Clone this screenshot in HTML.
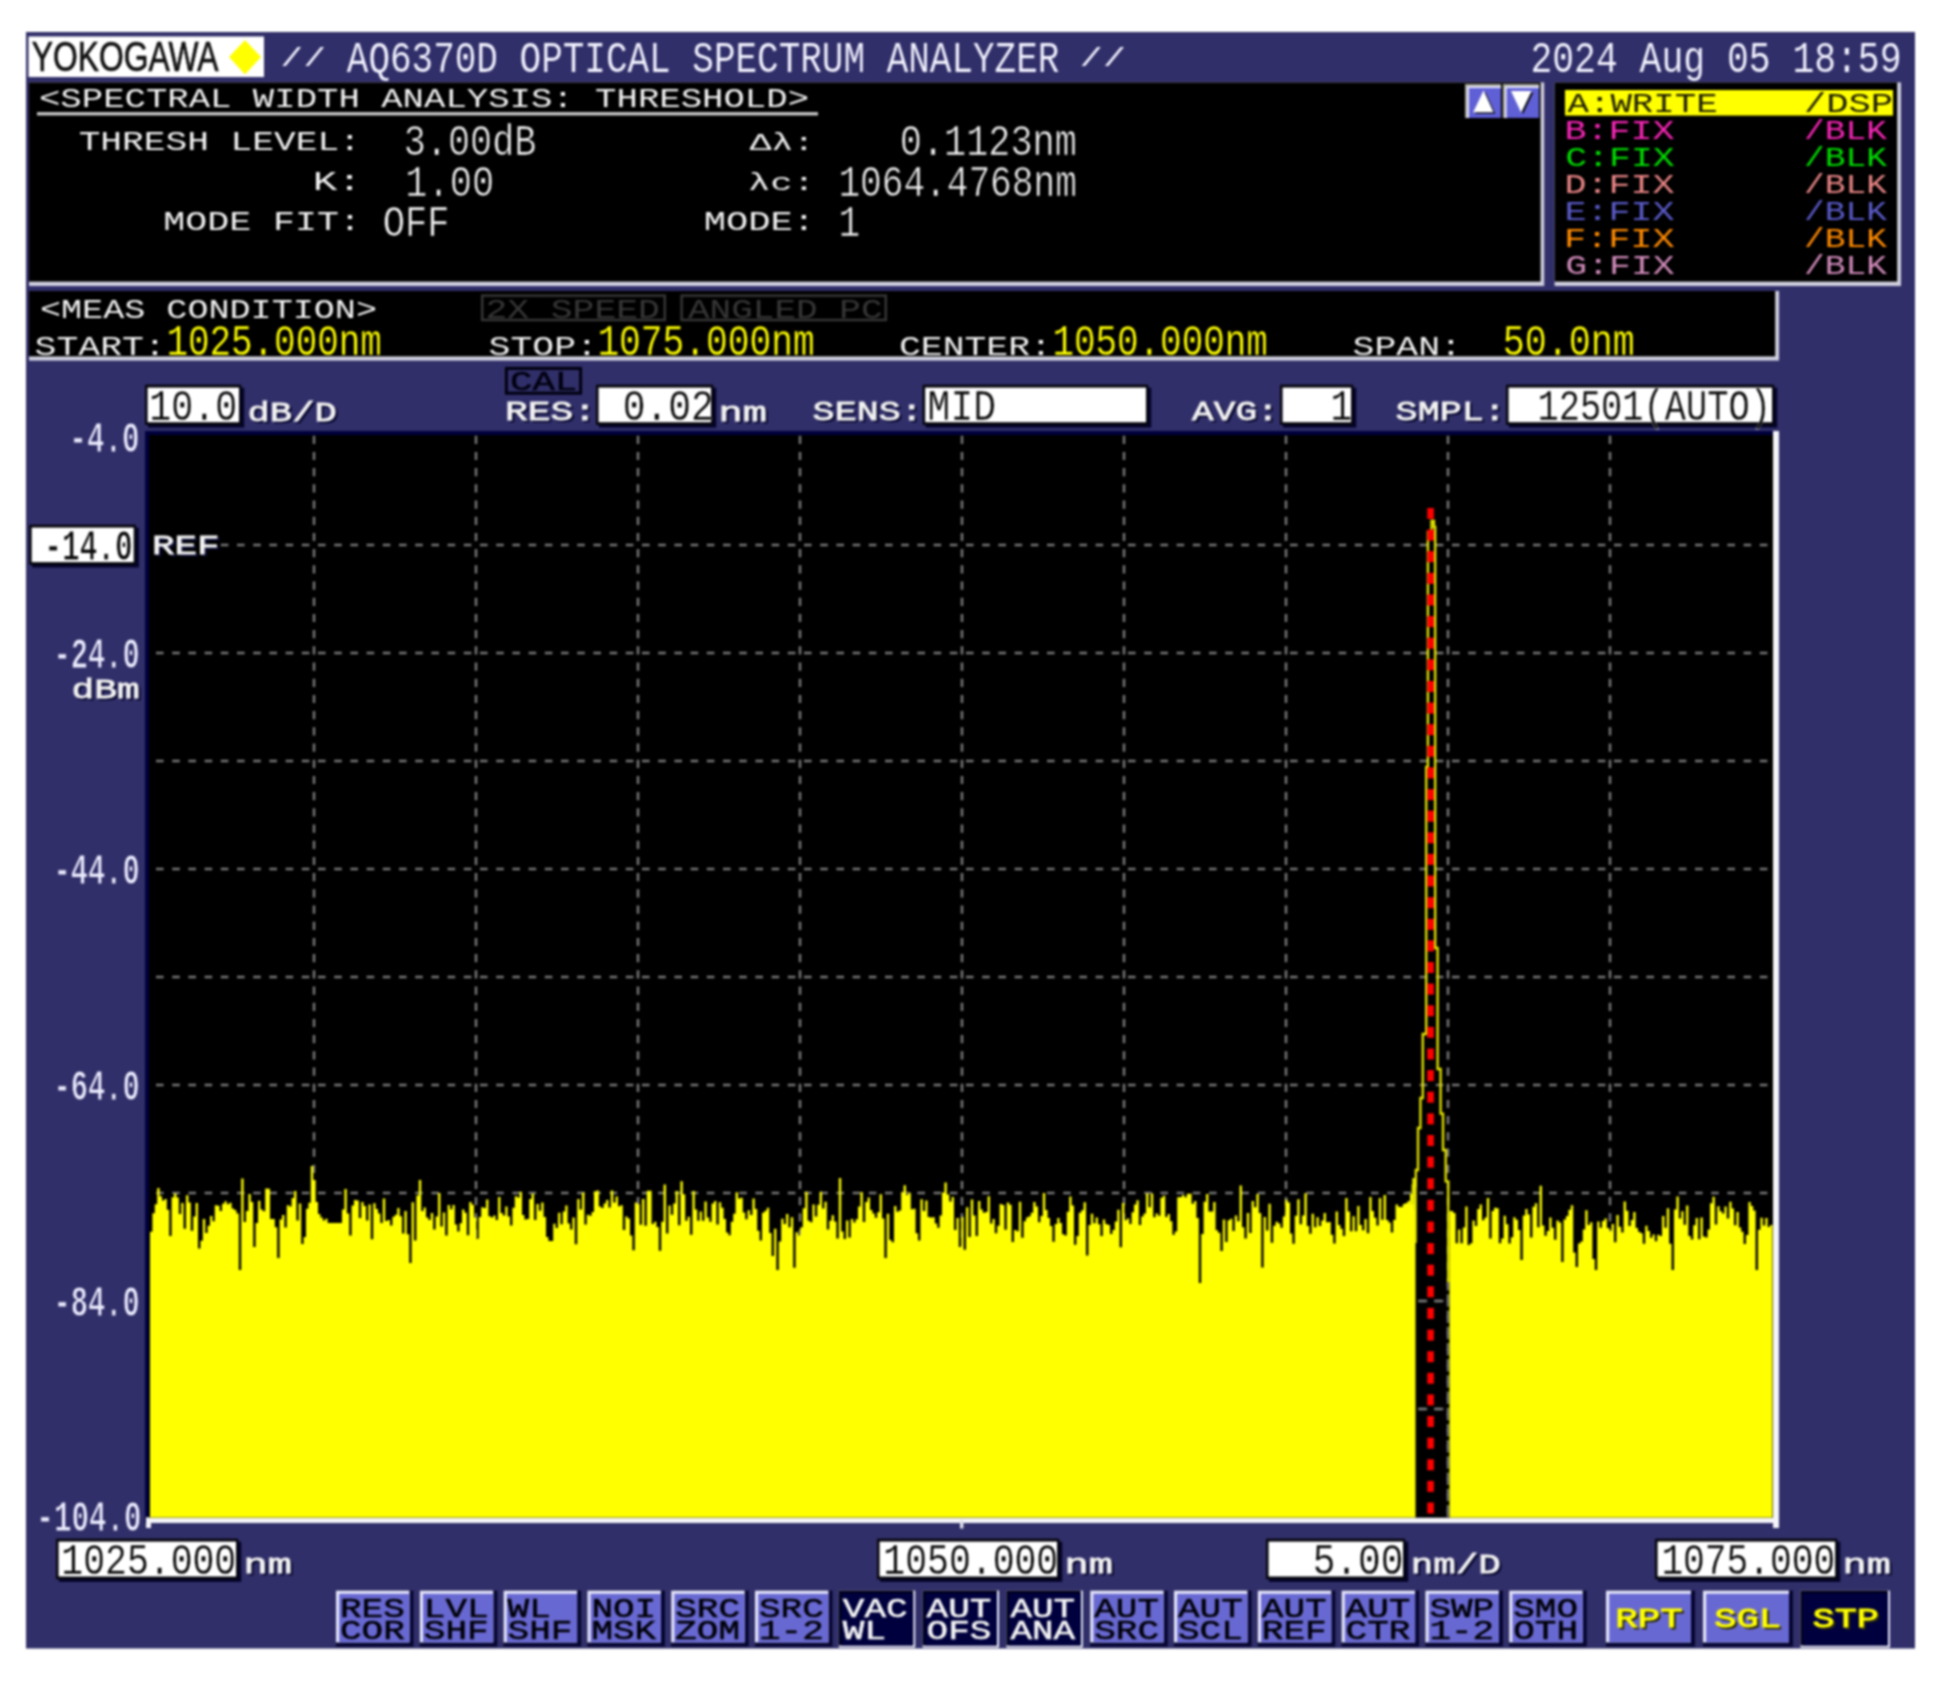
<!DOCTYPE html>
<html lang="en">
<head>
<meta charset="utf-8">
<title>AQ6370D Optical Spectrum Analyzer</title>
<style>
html,body{margin:0;padding:0;background:#ffffff;}
body{width:1939px;height:1681px;overflow:hidden;}
svg{display:block;}
text{white-space:pre;}
</style>
</head>
<body>
<svg width="1939" height="1681" viewBox="0 0 1939 1681">
<defs>
<filter id="soft0" x="0" y="0" width="1939" height="1681" filterUnits="userSpaceOnUse" color-interpolation-filters="sRGB"><feGaussianBlur stdDeviation="1"/></filter>
</defs>
<rect x="0" y="0" width="1939" height="1681" fill="#ffffff"/>
<g filter="url(#soft0)">
<rect x="26.00" y="32.00" width="1889.00" height="1616.50" fill="#312f69"/>
<rect x="28.50" y="36.50" width="235.50" height="40.50" fill="#ffffff"/>
<text x="31.81" y="71.30" fill="#101010" font-family="'Liberation Sans', sans-serif" font-size="42.73" textLength="186.75" lengthAdjust="spacingAndGlyphs" xml:space="preserve" stroke="#101010" stroke-width="0.7">YOKOGAWA</text>
<polygon points="229,57 245,40 261,57 245,74.5" fill="#ffff00"/>
<text x="346.80" y="71.60" fill="#f2f2ff" stroke="#312f69" stroke-width="0.15" font-family="'Liberation Mono', monospace" font-size="44.63" textLength="712.61" lengthAdjust="spacingAndGlyphs" xml:space="preserve">AQ6370D OPTICAL SPECTRUM ANALYZER</text>
<text x="280.27" y="66.34" fill="#f2f2ff" font-family="'Liberation Mono', monospace" font-size="26.69" textLength="45.89" lengthAdjust="spacingAndGlyphs" xml:space="preserve">//</text>
<text x="1079.43" y="66.34" fill="#f2f2ff" font-family="'Liberation Mono', monospace" font-size="26.69" textLength="46.78" lengthAdjust="spacingAndGlyphs" xml:space="preserve">//</text>
<text x="1530.44" y="71.60" fill="#f2f2ff" stroke="#312f69" stroke-width="0.15" font-family="'Liberation Mono', monospace" font-size="44.63" textLength="371.08" lengthAdjust="spacingAndGlyphs" xml:space="preserve">2024 Aug 05 18:59</text>
<rect x="29.00" y="82.40" width="1515.20" height="203.60" fill="#cfcfde"/>
<rect x="29.00" y="82.40" width="1511.60" height="199.20" fill="#000000"/>
<text x="38.98" y="107.00" fill="#f2f2f2" stroke="#000000" stroke-width="0.00" font-family="'Liberation Mono', monospace" font-size="28.24" textLength="770.07" lengthAdjust="spacingAndGlyphs" xml:space="preserve">&lt;SPECTRAL WIDTH ANALYSIS: THRESHOLD&gt;</text>
<rect x="37.00" y="112.20" width="781.00" height="3.20" fill="#d0d0d0"/>
<text x="78.66" y="150.00" fill="#f2f2f2" stroke="#000000" stroke-width="0.00" font-family="'Liberation Mono', monospace" font-size="28.24" textLength="282.14" lengthAdjust="spacingAndGlyphs" xml:space="preserve">THRESH LEVEL:</text>
<text x="312.76" y="190.00" fill="#f2f2f2" stroke="#000000" stroke-width="0.00" font-family="'Liberation Mono', monospace" font-size="28.24" textLength="49.21" lengthAdjust="spacingAndGlyphs" xml:space="preserve">K:</text>
<text x="163.30" y="230.40" fill="#f2f2f2" stroke="#000000" stroke-width="0.00" font-family="'Liberation Mono', monospace" font-size="28.24" textLength="197.60" lengthAdjust="spacingAndGlyphs" xml:space="preserve">MODE FIT:</text>
<text x="403.70" y="155.00" fill="#f2f2f2" stroke="#000000" stroke-width="0.70" font-family="'Liberation Mono', monospace" font-size="44.63" textLength="132.69" lengthAdjust="spacingAndGlyphs" xml:space="preserve">3.00dB</text>
<text x="405.32" y="195.60" fill="#f2f2f2" stroke="#000000" stroke-width="0.70" font-family="'Liberation Mono', monospace" font-size="44.63" textLength="88.96" lengthAdjust="spacingAndGlyphs" xml:space="preserve">1.00</text>
<text x="382.65" y="236.00" fill="#f2f2f2" stroke="#000000" stroke-width="0.70" font-family="'Liberation Mono', monospace" font-size="44.63" textLength="66.97" lengthAdjust="spacingAndGlyphs" xml:space="preserve">OFF</text>
<text x="749.79" y="150.00" fill="#f2f2f2" stroke="#000000" stroke-width="0.00" font-family="'Liberation Mono', monospace" font-size="24.28" textLength="64.99" lengthAdjust="spacingAndGlyphs" xml:space="preserve">Δλ:</text>
<text x="747.92" y="190.00" fill="#f2f2f2" stroke="#000000" stroke-width="0.00" font-family="'Liberation Mono', monospace" font-size="24.28" textLength="67.15" lengthAdjust="spacingAndGlyphs" xml:space="preserve">λc:</text>
<text x="703.66" y="230.40" fill="#f2f2f2" stroke="#000000" stroke-width="0.00" font-family="'Liberation Mono', monospace" font-size="28.24" textLength="111.36" lengthAdjust="spacingAndGlyphs" xml:space="preserve">MODE:</text>
<text x="899.77" y="155.00" fill="#f2f2f2" stroke="#000000" stroke-width="0.70" font-family="'Liberation Mono', monospace" font-size="44.63" textLength="177.13" lengthAdjust="spacingAndGlyphs" xml:space="preserve">0.1123nm</text>
<text x="838.39" y="195.60" fill="#f2f2f2" stroke="#000000" stroke-width="0.70" font-family="'Liberation Mono', monospace" font-size="44.63" textLength="238.46" lengthAdjust="spacingAndGlyphs" xml:space="preserve">1064.4768nm</text>
<text x="838.50" y="236.00" fill="#f2f2f2" stroke="#000000" stroke-width="0.70" font-family="'Liberation Mono', monospace" font-size="44.63" textLength="21.60" lengthAdjust="spacingAndGlyphs" xml:space="preserve">1</text>
<rect x="1465.00" y="84.00" width="36.00" height="34.00" fill="#a8a8a0"/>
<rect x="1467.20" y="86.20" width="33.80" height="31.80" fill="#e8e8ff"/>
<rect x="1469.00" y="88.20" width="32.00" height="29.80" fill="#5a5ad0"/>
<rect x="1469.00" y="88.20" width="30.50" height="28.30" fill="#6060d6"/>
<polygon points="1485.4,92.1 1495.3,113.8 1475.0,113.8" fill="#101020"/>
<polygon points="1483.6,90.5 1493.5,112.2 1473.2,112.2" fill="#ffffff"/>
<rect x="1502.80" y="84.00" width="36.20" height="34.00" fill="#a8a8a0"/>
<rect x="1505.00" y="86.20" width="34.00" height="31.80" fill="#e8e8ff"/>
<rect x="1506.80" y="88.20" width="32.20" height="29.80" fill="#5a5ad0"/>
<rect x="1506.80" y="88.20" width="30.70" height="28.30" fill="#6060d6"/>
<polygon points="1512.8,92.6 1533.4,92.6 1523.0,114.2" fill="#101020"/>
<polygon points="1511.0,91.0 1531.6,91.0 1521.2,112.6" fill="#ffffff"/>
<rect x="1554.60" y="82.40" width="346.40" height="203.60" fill="#cfcfde"/>
<rect x="1554.60" y="82.40" width="342.60" height="199.20" fill="#000000"/>
<rect x="1565.00" y="90.00" width="328.00" height="25.60" fill="#ffff00"/>
<text x="1567.40" y="112.30" fill="#1c1c00" stroke="#ffff00" stroke-width="0.00" font-family="'Liberation Mono', monospace" font-size="28.24" textLength="150.47" lengthAdjust="spacingAndGlyphs" xml:space="preserve">A:WRITE</text>
<text x="1803.93" y="112.30" fill="#1c1c00" stroke="#ffff00" stroke-width="0.00" font-family="'Liberation Mono', monospace" font-size="28.24" textLength="89.06" lengthAdjust="spacingAndGlyphs" xml:space="preserve">/DSP</text>
<text x="1564.50" y="139.25" fill="#f626b6" font-family="'Liberation Mono', monospace" font-size="28.24" textLength="110.15" lengthAdjust="spacingAndGlyphs" xml:space="preserve">B:FIX</text>
<text x="1804.08" y="139.25" fill="#f626b6" font-family="'Liberation Mono', monospace" font-size="28.24" textLength="82.96" lengthAdjust="spacingAndGlyphs" xml:space="preserve">/BLK</text>
<text x="1565.39" y="166.20" fill="#00dc00" font-family="'Liberation Mono', monospace" font-size="28.24" textLength="109.25" lengthAdjust="spacingAndGlyphs" xml:space="preserve">C:FIX</text>
<text x="1804.08" y="166.20" fill="#00dc00" font-family="'Liberation Mono', monospace" font-size="28.24" textLength="82.96" lengthAdjust="spacingAndGlyphs" xml:space="preserve">/BLK</text>
<text x="1564.50" y="193.15" fill="#e88484" font-family="'Liberation Mono', monospace" font-size="28.24" textLength="110.15" lengthAdjust="spacingAndGlyphs" xml:space="preserve">D:FIX</text>
<text x="1804.08" y="193.15" fill="#e88484" font-family="'Liberation Mono', monospace" font-size="28.24" textLength="82.96" lengthAdjust="spacingAndGlyphs" xml:space="preserve">/BLK</text>
<text x="1564.50" y="220.10" fill="#5a5ac8" font-family="'Liberation Mono', monospace" font-size="28.24" textLength="110.15" lengthAdjust="spacingAndGlyphs" xml:space="preserve">E:FIX</text>
<text x="1804.08" y="220.10" fill="#5a5ac8" font-family="'Liberation Mono', monospace" font-size="28.24" textLength="82.96" lengthAdjust="spacingAndGlyphs" xml:space="preserve">/BLK</text>
<text x="1563.90" y="247.05" fill="#ff8a00" font-family="'Liberation Mono', monospace" font-size="28.24" textLength="110.75" lengthAdjust="spacingAndGlyphs" xml:space="preserve">F:FIX</text>
<text x="1804.08" y="247.05" fill="#ff8a00" font-family="'Liberation Mono', monospace" font-size="28.24" textLength="82.96" lengthAdjust="spacingAndGlyphs" xml:space="preserve">/BLK</text>
<text x="1565.39" y="274.00" fill="#d08aba" font-family="'Liberation Mono', monospace" font-size="28.24" textLength="109.25" lengthAdjust="spacingAndGlyphs" xml:space="preserve">G:FIX</text>
<text x="1804.08" y="274.00" fill="#d08aba" font-family="'Liberation Mono', monospace" font-size="28.24" textLength="82.96" lengthAdjust="spacingAndGlyphs" xml:space="preserve">/BLK</text>
<rect x="29.00" y="291.00" width="1750.00" height="69.60" fill="#cfcfde"/>
<rect x="29.00" y="291.00" width="1746.20" height="65.40" fill="#000000"/>
<text x="40.01" y="317.50" fill="#f2f2f2" stroke="#000000" stroke-width="0.00" font-family="'Liberation Mono', monospace" font-size="28.24" textLength="337.01" lengthAdjust="spacingAndGlyphs" xml:space="preserve">&lt;MEAS CONDITION&gt;</text>
<rect x="482.2" y="295.6" width="182.6" height="24.4" fill="none" stroke="#373737" stroke-width="2.4"/>
<text x="485.45" y="317.60" fill="#373737" stroke="#000000" stroke-width="0.00" font-family="'Liberation Mono', monospace" font-size="28.24" textLength="174.40" lengthAdjust="spacingAndGlyphs" xml:space="preserve">2X SPEED</text>
<rect x="681.6" y="295.6" width="204.20000000000002" height="24.4" fill="none" stroke="#373737" stroke-width="2.4"/>
<text x="688.00" y="317.60" fill="#373737" stroke="#000000" stroke-width="0.00" font-family="'Liberation Mono', monospace" font-size="28.24" textLength="194.53" lengthAdjust="spacingAndGlyphs" xml:space="preserve">ANGLED PC</text>
<text x="34.59" y="355.00" fill="#f2f2f2" stroke="#000000" stroke-width="0.00" font-family="'Liberation Mono', monospace" font-size="28.24" textLength="131.27" lengthAdjust="spacingAndGlyphs" xml:space="preserve">START:</text>
<text x="166.41" y="355.00" fill="#ffff00" stroke="#000000" stroke-width="0.30" font-family="'Liberation Mono', monospace" font-size="44.63" textLength="215.43" lengthAdjust="spacingAndGlyphs" xml:space="preserve">1025.000nm</text>
<text x="488.60" y="355.00" fill="#f2f2f2" stroke="#000000" stroke-width="0.00" font-family="'Liberation Mono', monospace" font-size="28.24" textLength="109.26" lengthAdjust="spacingAndGlyphs" xml:space="preserve">STOP:</text>
<text x="597.38" y="355.00" fill="#ffff00" stroke="#000000" stroke-width="0.30" font-family="'Liberation Mono', monospace" font-size="44.63" textLength="217.48" lengthAdjust="spacingAndGlyphs" xml:space="preserve">1075.000nm</text>
<text x="898.99" y="355.00" fill="#f2f2f2" stroke="#000000" stroke-width="0.00" font-family="'Liberation Mono', monospace" font-size="28.24" textLength="152.86" lengthAdjust="spacingAndGlyphs" xml:space="preserve">CENTER:</text>
<text x="1052.41" y="355.00" fill="#ffff00" stroke="#000000" stroke-width="0.30" font-family="'Liberation Mono', monospace" font-size="44.63" textLength="215.43" lengthAdjust="spacingAndGlyphs" xml:space="preserve">1050.000nm</text>
<text x="1352.60" y="355.00" fill="#f2f2f2" stroke="#000000" stroke-width="0.00" font-family="'Liberation Mono', monospace" font-size="28.24" textLength="109.26" lengthAdjust="spacingAndGlyphs" xml:space="preserve">SPAN:</text>
<text x="1502.71" y="355.00" fill="#ffff00" stroke="#000000" stroke-width="0.30" font-family="'Liberation Mono', monospace" font-size="44.63" textLength="132.18" lengthAdjust="spacingAndGlyphs" xml:space="preserve">50.0nm</text>
<rect x="148.00" y="387.70" width="96.30" height="39.90" fill="#04042a"/>
<rect x="145.00" y="384.70" width="96.30" height="40.30" fill="#06060e"/>
<rect x="147.60" y="387.60" width="91.40" height="34.60" fill="#ffffff"/>
<text x="149.35" y="420.00" fill="#080808" stroke="#ffffff" stroke-width="0.30" font-family="'Liberation Mono', monospace" font-size="44.63" textLength="87.90" lengthAdjust="spacingAndGlyphs" xml:space="preserve">10.0</text>
<text x="249.69" y="423.40" fill="#0c0c34" stroke="#0c0c34" stroke-width="0.8" font-family="'Liberation Mono', monospace" font-size="28.24" textLength="89.40" lengthAdjust="spacingAndGlyphs" xml:space="preserve">dB/D</text>
<text x="247.49" y="421.00" fill="#f2f2f2" font-family="'Liberation Mono', monospace" font-size="28.24" textLength="89.40" lengthAdjust="spacingAndGlyphs" xml:space="preserve" stroke="#f2f2f2" stroke-width="0.8">dB/D</text>
<rect x="506.4" y="368.4" width="74.2" height="24.8" fill="none" stroke="#000010" stroke-width="3.0"/>
<text x="509.93" y="390.00" fill="#000010" font-family="'Liberation Mono', monospace" font-size="28.24" textLength="67.43" lengthAdjust="spacingAndGlyphs" xml:space="preserve" stroke="#000010" stroke-width="0.5">CAL</text>
<text x="507.19" y="422.40" fill="#0c0c34" stroke="#0c0c34" stroke-width="0.8" font-family="'Liberation Mono', monospace" font-size="28.24" textLength="91.25" lengthAdjust="spacingAndGlyphs" xml:space="preserve">RES:</text>
<text x="504.99" y="420.00" fill="#f2f2f2" font-family="'Liberation Mono', monospace" font-size="28.24" textLength="91.25" lengthAdjust="spacingAndGlyphs" xml:space="preserve" stroke="#f2f2f2" stroke-width="0.8">RES:</text>
<rect x="599.00" y="387.70" width="117.30" height="39.90" fill="#04042a"/>
<rect x="596.00" y="384.70" width="117.30" height="40.30" fill="#06060e"/>
<rect x="598.60" y="387.60" width="112.40" height="34.60" fill="#ffffff"/>
<text x="622.71" y="420.00" fill="#080808" stroke="#ffffff" stroke-width="0.30" font-family="'Liberation Mono', monospace" font-size="44.63" textLength="90.98" lengthAdjust="spacingAndGlyphs" xml:space="preserve">0.02</text>
<text x="720.66" y="423.40" fill="#0c0c34" stroke="#0c0c34" stroke-width="0.8" font-family="'Liberation Mono', monospace" font-size="28.24" textLength="48.62" lengthAdjust="spacingAndGlyphs" xml:space="preserve">nm</text>
<text x="718.46" y="421.00" fill="#f2f2f2" font-family="'Liberation Mono', monospace" font-size="28.24" textLength="48.62" lengthAdjust="spacingAndGlyphs" xml:space="preserve" stroke="#f2f2f2" stroke-width="0.8">nm</text>
<text x="814.78" y="422.40" fill="#0c0c34" stroke="#0c0c34" stroke-width="0.8" font-family="'Liberation Mono', monospace" font-size="28.24" textLength="110.36" lengthAdjust="spacingAndGlyphs" xml:space="preserve">SENS:</text>
<text x="812.58" y="420.00" fill="#f2f2f2" font-family="'Liberation Mono', monospace" font-size="28.24" textLength="110.36" lengthAdjust="spacingAndGlyphs" xml:space="preserve" stroke="#f2f2f2" stroke-width="0.8">SENS:</text>
<rect x="925.60" y="387.70" width="225.70" height="39.90" fill="#04042a"/>
<rect x="922.60" y="384.70" width="225.70" height="40.30" fill="#06060e"/>
<rect x="925.20" y="387.60" width="220.80" height="34.60" fill="#ffffff"/>
<text x="927.61" y="420.00" fill="#080808" stroke="#ffffff" stroke-width="0.30" font-family="'Liberation Mono', monospace" font-size="44.63" textLength="68.32" lengthAdjust="spacingAndGlyphs" xml:space="preserve">MID</text>
<text x="1194.20" y="422.40" fill="#0c0c34" stroke="#0c0c34" stroke-width="0.8" font-family="'Liberation Mono', monospace" font-size="28.24" textLength="86.79" lengthAdjust="spacingAndGlyphs" xml:space="preserve">AVG:</text>
<text x="1192.00" y="420.00" fill="#f2f2f2" font-family="'Liberation Mono', monospace" font-size="28.24" textLength="86.79" lengthAdjust="spacingAndGlyphs" xml:space="preserve" stroke="#f2f2f2" stroke-width="0.8">AVG:</text>
<rect x="1283.00" y="387.70" width="73.30" height="39.90" fill="#04042a"/>
<rect x="1280.00" y="384.70" width="73.30" height="40.30" fill="#06060e"/>
<rect x="1282.60" y="387.60" width="68.40" height="34.60" fill="#ffffff"/>
<text x="1330.50" y="420.00" fill="#080808" stroke="#ffffff" stroke-width="0.30" font-family="'Liberation Mono', monospace" font-size="44.63" textLength="21.60" lengthAdjust="spacingAndGlyphs" xml:space="preserve">1</text>
<text x="1397.78" y="422.40" fill="#0c0c34" stroke="#0c0c34" stroke-width="0.8" font-family="'Liberation Mono', monospace" font-size="28.24" textLength="110.36" lengthAdjust="spacingAndGlyphs" xml:space="preserve">SMPL:</text>
<text x="1395.58" y="420.00" fill="#f2f2f2" font-family="'Liberation Mono', monospace" font-size="28.24" textLength="110.36" lengthAdjust="spacingAndGlyphs" xml:space="preserve" stroke="#f2f2f2" stroke-width="0.8">SMPL:</text>
<rect x="1509.00" y="387.70" width="268.30" height="39.90" fill="#04042a"/>
<rect x="1506.00" y="384.70" width="268.30" height="40.30" fill="#06060e"/>
<rect x="1508.60" y="387.60" width="263.40" height="34.60" fill="#ffffff"/>
<text x="1537.44" y="420.00" fill="#080808" stroke="#ffffff" stroke-width="0.30" font-family="'Liberation Mono', monospace" font-size="44.63" textLength="233.50" lengthAdjust="spacingAndGlyphs" xml:space="preserve">12501(AUTO)</text>
<rect x="145.00" y="431.00" width="1634.00" height="1092.00" fill="#00003c"/>
<rect x="1773.00" y="431.00" width="6.00" height="1097.00" fill="#f4f4f8"/>
<rect x="146.00" y="1517.50" width="1633.00" height="5.50" fill="#f4f4f8"/>
<rect x="146.00" y="1517.50" width="5.00" height="10.50" fill="#f4f4f8"/>
<rect x="960.00" y="1520.00" width="3.40" height="8.50" fill="#e0e0ee"/>
<rect x="149.00" y="435.00" width="1624.00" height="1082.50" fill="#000000"/>
<g stroke="#767676" stroke-width="2.5" fill="none"><line x1="314" y1="435.7" x2="314" y2="1517" stroke-dasharray="8.2 8.0" /><line x1="476" y1="435.7" x2="476" y2="1517" stroke-dasharray="8.2 8.0" /><line x1="638" y1="435.7" x2="638" y2="1517" stroke-dasharray="8.2 8.0" /><line x1="800" y1="435.7" x2="800" y2="1517" stroke-dasharray="8.2 8.0" /><line x1="962" y1="435.7" x2="962" y2="1517" stroke-dasharray="8.2 8.0" /><line x1="1124" y1="435.7" x2="1124" y2="1517" stroke-dasharray="8.2 8.0" /><line x1="1286" y1="435.7" x2="1286" y2="1517" stroke-dasharray="8.2 8.0" /><line x1="1448" y1="435.7" x2="1448" y2="1517" stroke-dasharray="8.2 8.0" /><line x1="1610" y1="435.7" x2="1610" y2="1517" stroke-dasharray="8.2 8.0" /><line x1="220.8" y1="545" x2="1771" y2="545" stroke-dasharray="7.6 8.6" /><line x1="156.0" y1="653" x2="1771" y2="653" stroke-dasharray="7.6 8.6" /><line x1="156.0" y1="761" x2="1771" y2="761" stroke-dasharray="7.6 8.6" /><line x1="156.0" y1="869" x2="1771" y2="869" stroke-dasharray="7.6 8.6" /><line x1="156.0" y1="977" x2="1771" y2="977" stroke-dasharray="7.6 8.6" /><line x1="156.0" y1="1085" x2="1771" y2="1085" stroke-dasharray="7.6 8.6" /><line x1="156.0" y1="1193" x2="1771" y2="1193" stroke-dasharray="7.6 8.6" /><line x1="156.0" y1="1301" x2="1771" y2="1301" stroke-dasharray="7.6 8.6" /><line x1="156.0" y1="1409" x2="1771" y2="1409" stroke-dasharray="7.6 8.6" /></g>
<g><polygon points="150.0,1517.5 150.0,1231.7 152.4,1231.7 152.4,1213.3 154.8,1213.3 154.8,1204.2 157.2,1204.2 157.2,1188.0 159.6,1188.0 159.6,1196.3 162.0,1196.3 162.0,1200.5 164.4,1200.5 164.4,1199.1 166.8,1199.1 166.8,1209.7 169.2,1209.7 169.2,1235.9 171.6,1235.9 171.6,1197.3 174.0,1197.3 174.0,1193.5 176.4,1193.5 176.4,1197.5 178.8,1197.5 178.8,1214.1 181.2,1214.1 181.2,1203.1 183.6,1203.1 183.6,1228.7 186.0,1228.7 186.0,1195.3 188.4,1195.3 188.4,1202.6 190.8,1202.6 190.8,1230.7 193.2,1230.7 193.2,1216.4 195.6,1216.4 195.6,1202.9 198.0,1202.9 198.0,1248.5 200.4,1248.5 200.4,1240.7 202.8,1240.7 202.8,1218.9 205.2,1218.9 205.2,1232.9 207.6,1232.9 207.6,1225.8 210.0,1225.8 210.0,1216.1 212.4,1216.1 212.4,1221.3 214.8,1221.3 214.8,1205.3 217.2,1205.3 217.2,1205.7 219.6,1205.7 219.6,1210.9 222.0,1210.9 222.0,1203.8 224.4,1203.8 224.4,1201.2 226.8,1201.2 226.8,1204.2 229.2,1204.2 229.2,1202.8 231.6,1202.8 231.6,1208.4 234.0,1208.4 234.0,1210.0 236.4,1210.0 236.4,1213.6 238.8,1213.6 238.8,1270.0 241.2,1270.0 241.2,1178.5 243.6,1178.5 243.6,1221.9 246.0,1221.9 246.0,1210.9 248.4,1210.9 248.4,1194.1 250.8,1194.1 250.8,1202.0 253.2,1202.0 253.2,1247.0 255.6,1247.0 255.6,1223.1 258.0,1223.1 258.0,1200.7 260.4,1200.7 260.4,1209.4 262.8,1209.4 262.8,1211.2 265.2,1211.2 265.2,1188.6 267.6,1188.6 267.6,1188.7 270.0,1188.7 270.0,1219.1 272.4,1219.1 272.4,1218.9 274.8,1218.9 274.8,1227.2 277.2,1227.2 277.2,1258.0 279.6,1258.0 279.6,1219.6 282.0,1219.6 282.0,1215.0 284.4,1215.0 284.4,1227.5 286.8,1227.5 286.8,1205.2 289.2,1205.2 289.2,1206.5 291.6,1206.5 291.6,1198.0 294.0,1198.0 294.0,1190.9 296.4,1190.9 296.4,1220.4 298.8,1220.4 298.8,1203.4 301.2,1203.4 301.2,1244.0 303.6,1244.0 303.6,1237.0 306.0,1237.0 306.0,1208.8 308.4,1208.8 308.4,1202.8 310.8,1202.8 310.8,1166.0 313.2,1166.0 313.2,1180.0 315.6,1180.0 315.6,1201.9 318.0,1201.9 318.0,1214.0 320.4,1214.0 320.4,1217.5 322.8,1217.5 322.8,1220.5 325.2,1220.5 325.2,1218.7 327.6,1218.7 327.6,1223.0 330.0,1223.0 330.0,1223.0 332.4,1223.0 332.4,1223.0 334.8,1223.0 334.8,1223.0 337.2,1223.0 337.2,1223.0 339.6,1223.0 339.6,1223.0 342.0,1223.0 342.0,1209.4 344.4,1209.4 344.4,1189.1 346.8,1189.1 346.8,1213.5 349.2,1213.5 349.2,1235.5 351.6,1235.5 351.6,1205.5 354.0,1205.5 354.0,1199.9 356.4,1199.9 356.4,1200.6 358.8,1200.6 358.8,1217.9 361.2,1217.9 361.2,1201.9 363.6,1201.9 363.6,1205.9 366.0,1205.9 366.0,1220.5 368.4,1220.5 368.4,1204.4 370.8,1204.4 370.8,1239.3 373.2,1239.3 373.2,1203.2 375.6,1203.2 375.6,1209.0 378.0,1209.0 378.0,1213.6 380.4,1213.6 380.4,1222.9 382.8,1222.9 382.8,1198.6 385.2,1198.6 385.2,1221.0 387.6,1221.0 387.6,1220.0 390.0,1220.0 390.0,1225.4 392.4,1225.4 392.4,1216.8 394.8,1216.8 394.8,1214.8 397.2,1214.8 397.2,1208.1 399.6,1208.1 399.6,1216.2 402.0,1216.2 402.0,1233.4 404.4,1233.4 404.4,1211.1 406.8,1211.1 406.8,1234.3 409.2,1234.3 409.2,1263.0 411.6,1263.0 411.6,1202.3 414.0,1202.3 414.0,1240.4 416.4,1240.4 416.4,1195.4 418.8,1195.4 418.8,1180.1 421.2,1180.1 421.2,1211.0 423.6,1211.0 423.6,1207.6 426.0,1207.6 426.0,1217.4 428.4,1217.4 428.4,1220.0 430.8,1220.0 430.8,1213.0 433.2,1213.0 433.2,1229.5 435.6,1229.5 435.6,1216.4 438.0,1216.4 438.0,1193.1 440.4,1193.1 440.4,1226.6 442.8,1226.6 442.8,1212.4 445.2,1212.4 445.2,1235.4 447.6,1235.4 447.6,1205.0 450.0,1205.0 450.0,1209.3 452.4,1209.3 452.4,1205.0 454.8,1205.0 454.8,1224.5 457.2,1224.5 457.2,1231.5 459.6,1231.5 459.6,1223.3 462.0,1223.3 462.0,1209.5 464.4,1209.5 464.4,1212.7 466.8,1212.7 466.8,1235.2 469.2,1235.2 469.2,1202.1 471.6,1202.1 471.6,1204.7 474.0,1204.7 474.0,1217.5 476.4,1217.5 476.4,1238.7 478.8,1238.7 478.8,1216.9 481.2,1216.9 481.2,1207.2 483.6,1207.2 483.6,1208.0 486.0,1208.0 486.0,1199.5 488.4,1199.5 488.4,1216.3 490.8,1216.3 490.8,1217.6 493.2,1217.6 493.2,1215.5 495.6,1215.5 495.6,1220.0 498.0,1220.0 498.0,1196.9 500.4,1196.9 500.4,1213.1 502.8,1213.1 502.8,1215.5 505.2,1215.5 505.2,1206.5 507.6,1206.5 507.6,1216.4 510.0,1216.4 510.0,1225.5 512.4,1225.5 512.4,1207.8 514.8,1207.8 514.8,1196.2 517.2,1196.2 517.2,1197.5 519.6,1197.5 519.6,1191.7 522.0,1191.7 522.0,1215.1 524.4,1215.1 524.4,1219.6 526.8,1219.6 526.8,1218.9 529.2,1218.9 529.2,1199.1 531.6,1199.1 531.6,1193.8 534.0,1193.8 534.0,1220.1 536.4,1220.1 536.4,1204.0 538.8,1204.0 538.8,1210.7 541.2,1210.7 541.2,1202.4 543.6,1202.4 543.6,1217.1 546.0,1217.1 546.0,1237.1 548.4,1237.1 548.4,1240.9 550.8,1240.9 550.8,1241.0 553.2,1241.0 553.2,1223.8 555.6,1223.8 555.6,1228.1 558.0,1228.1 558.0,1212.8 560.4,1212.8 560.4,1224.3 562.8,1224.3 562.8,1211.4 565.2,1211.4 565.2,1205.5 567.6,1205.5 567.6,1223.6 570.0,1223.6 570.0,1229.5 572.4,1229.5 572.4,1217.6 574.8,1217.6 574.8,1244.3 577.2,1244.3 577.2,1198.9 579.6,1198.9 579.6,1209.4 582.0,1209.4 582.0,1192.5 584.4,1192.5 584.4,1224.5 586.8,1224.5 586.8,1214.8 589.2,1214.8 589.2,1215.7 591.6,1215.7 591.6,1212.1 594.0,1212.1 594.0,1191.6 596.4,1191.6 596.4,1190.5 598.8,1190.5 598.8,1206.5 601.2,1206.5 601.2,1208.1 603.6,1208.1 603.6,1203.5 606.0,1203.5 606.0,1200.1 608.4,1200.1 608.4,1207.5 610.8,1207.5 610.8,1190.6 613.2,1190.6 613.2,1202.5 615.6,1202.5 615.6,1196.5 618.0,1196.5 618.0,1206.3 620.4,1206.3 620.4,1205.2 622.8,1205.2 622.8,1229.9 625.2,1229.9 625.2,1216.5 627.6,1216.5 627.6,1218.6 630.0,1218.6 630.0,1235.5 632.4,1235.5 632.4,1250.2 634.8,1250.2 634.8,1202.5 637.2,1202.5 637.2,1204.2 639.6,1204.2 639.6,1224.8 642.0,1224.8 642.0,1199.0 644.4,1199.0 644.4,1225.8 646.8,1225.8 646.8,1190.8 649.2,1190.8 649.2,1190.8 651.6,1190.8 651.6,1223.9 654.0,1223.9 654.0,1221.7 656.4,1221.7 656.4,1227.1 658.8,1227.1 658.8,1250.7 661.2,1250.7 661.2,1221.7 663.6,1221.7 663.6,1184.6 666.0,1184.6 666.0,1233.4 668.4,1233.4 668.4,1205.4 670.8,1205.4 670.8,1214.8 673.2,1214.8 673.2,1203.4 675.6,1203.4 675.6,1190.9 678.0,1190.9 678.0,1225.2 680.4,1225.2 680.4,1181.3 682.8,1181.3 682.8,1194.2 685.2,1194.2 685.2,1220.8 687.6,1220.8 687.6,1216.7 690.0,1216.7 690.0,1234.7 692.4,1234.7 692.4,1191.0 694.8,1191.0 694.8,1209.4 697.2,1209.4 697.2,1220.7 699.6,1220.7 699.6,1211.5 702.0,1211.5 702.0,1220.8 704.4,1220.8 704.4,1201.5 706.8,1201.5 706.8,1217.6 709.2,1217.6 709.2,1221.7 711.6,1221.7 711.6,1203.4 714.0,1203.4 714.0,1201.1 716.4,1201.1 716.4,1224.4 718.8,1224.4 718.8,1202.3 721.2,1202.3 721.2,1207.7 723.6,1207.7 723.6,1218.9 726.0,1218.9 726.0,1232.4 728.4,1232.4 728.4,1235.2 730.8,1235.2 730.8,1221.8 733.2,1221.8 733.2,1213.8 735.6,1213.8 735.6,1192.2 738.0,1192.2 738.0,1198.6 740.4,1198.6 740.4,1197.8 742.8,1197.8 742.8,1212.5 745.2,1212.5 745.2,1219.3 747.6,1219.3 747.6,1210.3 750.0,1210.3 750.0,1214.9 752.4,1214.9 752.4,1198.6 754.8,1198.6 754.8,1209.0 757.2,1209.0 757.2,1230.7 759.6,1230.7 759.6,1240.5 762.0,1240.5 762.0,1212.8 764.4,1212.8 764.4,1210.8 766.8,1210.8 766.8,1207.8 769.2,1207.8 769.2,1232.9 771.6,1232.9 771.6,1255.9 774.0,1255.9 774.0,1228.8 776.4,1228.8 776.4,1270.0 778.8,1270.0 778.8,1241.6 781.2,1241.6 781.2,1218.7 783.6,1218.7 783.6,1224.1 786.0,1224.1 786.0,1214.0 788.4,1214.0 788.4,1227.2 790.8,1227.2 790.8,1217.3 793.2,1217.3 793.2,1267.8 795.6,1267.8 795.6,1232.3 798.0,1232.3 798.0,1235.4 800.4,1235.4 800.4,1227.2 802.8,1227.2 802.8,1208.3 805.2,1208.3 805.2,1191.7 807.6,1191.7 807.6,1220.7 810.0,1220.7 810.0,1222.2 812.4,1222.2 812.4,1204.6 814.8,1204.6 814.8,1216.5 817.2,1216.5 817.2,1204.7 819.6,1204.7 819.6,1191.7 822.0,1191.7 822.0,1208.5 824.4,1208.5 824.4,1201.8 826.8,1201.8 826.8,1229.4 829.2,1229.4 829.2,1220.8 831.6,1220.8 831.6,1215.2 834.0,1215.2 834.0,1221.5 836.4,1221.5 836.4,1238.4 838.8,1238.4 838.8,1178.0 841.2,1178.0 841.2,1231.6 843.6,1231.6 843.6,1239.0 846.0,1239.0 846.0,1220.6 848.4,1220.6 848.4,1237.6 850.8,1237.6 850.8,1219.0 853.2,1219.0 853.2,1222.4 855.6,1222.4 855.6,1219.3 858.0,1219.3 858.0,1206.5 860.4,1206.5 860.4,1191.9 862.8,1191.9 862.8,1222.0 865.2,1222.0 865.2,1202.0 867.6,1202.0 867.6,1197.5 870.0,1197.5 870.0,1210.1 872.4,1210.1 872.4,1213.6 874.8,1213.6 874.8,1217.7 877.2,1217.7 877.2,1212.3 879.6,1212.3 879.6,1194.2 882.0,1194.2 882.0,1218.6 884.4,1218.6 884.4,1258.0 886.8,1258.0 886.8,1213.8 889.2,1213.8 889.2,1240.1 891.6,1240.1 891.6,1242.2 894.0,1242.2 894.0,1206.0 896.4,1206.0 896.4,1211.8 898.8,1211.8 898.8,1210.5 901.2,1210.5 901.2,1192.2 903.6,1192.2 903.6,1185.2 906.0,1185.2 906.0,1195.0 908.4,1195.0 908.4,1192.8 910.8,1192.8 910.8,1209.2 913.2,1209.2 913.2,1208.7 915.6,1208.7 915.6,1233.3 918.0,1233.3 918.0,1240.6 920.4,1240.6 920.4,1199.3 922.8,1199.3 922.8,1210.9 925.2,1210.9 925.2,1200.4 927.6,1200.4 927.6,1217.0 930.0,1217.0 930.0,1217.6 932.4,1217.6 932.4,1217.2 934.8,1217.2 934.8,1223.4 937.2,1223.4 937.2,1227.7 939.6,1227.7 939.6,1215.5 942.0,1215.5 942.0,1192.4 944.4,1192.4 944.4,1182.6 946.8,1182.6 946.8,1194.4 949.2,1194.4 949.2,1201.4 951.6,1201.4 951.6,1197.0 954.0,1197.0 954.0,1229.9 956.4,1229.9 956.4,1218.0 958.8,1218.0 958.8,1246.9 961.2,1246.9 961.2,1216.9 963.6,1216.9 963.6,1249.8 966.0,1249.8 966.0,1207.2 968.4,1207.2 968.4,1237.0 970.8,1237.0 970.8,1199.6 973.2,1199.6 973.2,1215.4 975.6,1215.4 975.6,1235.9 978.0,1235.9 978.0,1201.1 980.4,1201.1 980.4,1209.6 982.8,1209.6 982.8,1212.7 985.2,1212.7 985.2,1211.9 987.6,1211.9 987.6,1196.3 990.0,1196.3 990.0,1223.6 992.4,1223.6 992.4,1218.9 994.8,1218.9 994.8,1233.3 997.2,1233.3 997.2,1225.7 999.6,1225.7 999.6,1204.0 1002.0,1204.0 1002.0,1205.1 1004.4,1205.1 1004.4,1229.7 1006.8,1229.7 1006.8,1202.4 1009.2,1202.4 1009.2,1204.8 1011.6,1204.8 1011.6,1242.0 1014.0,1242.0 1014.0,1230.0 1016.4,1230.0 1016.4,1231.3 1018.8,1231.3 1018.8,1201.8 1021.2,1201.8 1021.2,1237.8 1023.6,1237.8 1023.6,1221.2 1026.0,1221.2 1026.0,1217.6 1028.4,1217.6 1028.4,1216.2 1030.8,1216.2 1030.8,1212.8 1033.2,1212.8 1033.2,1202.0 1035.6,1202.0 1035.6,1206.6 1038.0,1206.6 1038.0,1222.3 1040.4,1222.3 1040.4,1216.1 1042.8,1216.1 1042.8,1193.0 1045.2,1193.0 1045.2,1210.0 1047.6,1210.0 1047.6,1218.1 1050.0,1218.1 1050.0,1226.0 1052.4,1226.0 1052.4,1241.7 1054.8,1241.7 1054.8,1224.1 1057.2,1224.1 1057.2,1217.9 1059.6,1217.9 1059.6,1223.0 1062.0,1223.0 1062.0,1234.3 1064.4,1234.3 1064.4,1235.6 1066.8,1235.6 1066.8,1211.8 1069.2,1211.8 1069.2,1196.5 1071.6,1196.5 1071.6,1205.5 1074.0,1205.5 1074.0,1244.8 1076.4,1244.8 1076.4,1235.9 1078.8,1235.9 1078.8,1212.8 1081.2,1212.8 1081.2,1210.2 1083.6,1210.2 1083.6,1202.3 1086.0,1202.3 1086.0,1255.5 1088.4,1255.5 1088.4,1225.0 1090.8,1225.0 1090.8,1213.8 1093.2,1213.8 1093.2,1223.2 1095.6,1223.2 1095.6,1217.4 1098.0,1217.4 1098.0,1224.2 1100.4,1224.2 1100.4,1236.1 1102.8,1236.1 1102.8,1219.6 1105.2,1219.6 1105.2,1224.0 1107.6,1224.0 1107.6,1225.1 1110.0,1225.1 1110.0,1234.0 1112.4,1234.0 1112.4,1230.1 1114.8,1230.1 1114.8,1221.5 1117.2,1221.5 1117.2,1209.7 1119.6,1209.7 1119.6,1247.3 1122.0,1247.3 1122.0,1203.1 1124.4,1203.1 1124.4,1220.2 1126.8,1220.2 1126.8,1218.4 1129.2,1218.4 1129.2,1224.1 1131.6,1224.1 1131.6,1212.3 1134.0,1212.3 1134.0,1204.5 1136.4,1204.5 1136.4,1200.3 1138.8,1200.3 1138.8,1225.1 1141.2,1225.1 1141.2,1216.6 1143.6,1216.6 1143.6,1213.4 1146.0,1213.4 1146.0,1193.5 1148.4,1193.5 1148.4,1207.2 1150.8,1207.2 1150.8,1193.6 1153.2,1193.6 1153.2,1217.3 1155.6,1217.3 1155.6,1213.6 1158.0,1213.6 1158.0,1215.7 1160.4,1215.7 1160.4,1197.7 1162.8,1197.7 1162.8,1195.7 1165.2,1195.7 1165.2,1217.1 1167.6,1217.1 1167.6,1214.0 1170.0,1214.0 1170.0,1221.3 1172.4,1221.3 1172.4,1234.7 1174.8,1234.7 1174.8,1231.6 1177.2,1231.6 1177.2,1197.2 1179.6,1197.2 1179.6,1197.0 1182.0,1197.0 1182.0,1195.0 1184.4,1195.0 1184.4,1197.3 1186.8,1197.3 1186.8,1193.8 1189.2,1193.8 1189.2,1193.8 1191.6,1193.8 1191.6,1203.7 1194.0,1203.7 1194.0,1200.9 1196.4,1200.9 1196.4,1217.9 1198.8,1217.9 1198.8,1283.0 1201.2,1283.0 1201.2,1233.9 1203.6,1233.9 1203.6,1201.8 1206.0,1201.8 1206.0,1193.9 1208.4,1193.9 1208.4,1211.6 1210.8,1211.6 1210.8,1211.5 1213.2,1211.5 1213.2,1202.1 1215.6,1202.1 1215.6,1230.3 1218.0,1230.3 1218.0,1232.7 1220.4,1232.7 1220.4,1251.0 1222.8,1251.0 1222.8,1219.6 1225.2,1219.6 1225.2,1242.0 1227.6,1242.0 1227.6,1220.2 1230.0,1220.2 1230.0,1218.8 1232.4,1218.8 1232.4,1230.9 1234.8,1230.9 1234.8,1215.5 1237.2,1215.5 1237.2,1221.3 1239.6,1221.3 1239.6,1185.6 1242.0,1185.6 1242.0,1227.2 1244.4,1227.2 1244.4,1238.5 1246.8,1238.5 1246.8,1213.1 1249.2,1213.1 1249.2,1233.1 1251.6,1233.1 1251.6,1201.1 1254.0,1201.1 1254.0,1207.2 1256.4,1207.2 1256.4,1194.1 1258.8,1194.1 1258.8,1213.1 1261.2,1213.1 1261.2,1267.6 1263.6,1267.6 1263.6,1217.0 1266.0,1217.0 1266.0,1230.4 1268.4,1230.4 1268.4,1203.8 1270.8,1203.8 1270.8,1242.8 1273.2,1242.8 1273.2,1225.7 1275.6,1225.7 1275.6,1221.8 1278.0,1221.8 1278.0,1223.6 1280.4,1223.6 1280.4,1227.8 1282.8,1227.8 1282.8,1216.4 1285.2,1216.4 1285.2,1199.7 1287.6,1199.7 1287.6,1202.4 1290.0,1202.4 1290.0,1233.4 1292.4,1233.4 1292.4,1243.8 1294.8,1243.8 1294.8,1215.7 1297.2,1215.7 1297.2,1199.3 1299.6,1199.3 1299.6,1224.3 1302.0,1224.3 1302.0,1215.4 1304.4,1215.4 1304.4,1193.2 1306.8,1193.2 1306.8,1225.9 1309.2,1225.9 1309.2,1233.8 1311.6,1233.8 1311.6,1213.7 1314.0,1213.7 1314.0,1227.2 1316.4,1227.2 1316.4,1217.3 1318.8,1217.3 1318.8,1226.1 1321.2,1226.1 1321.2,1220.5 1323.6,1220.5 1323.6,1213.1 1326.0,1213.1 1326.0,1222.2 1328.4,1222.2 1328.4,1222.1 1330.8,1222.1 1330.8,1234.7 1333.2,1234.7 1333.2,1243.4 1335.6,1243.4 1335.6,1211.5 1338.0,1211.5 1338.0,1224.9 1340.4,1224.9 1340.4,1228.8 1342.8,1228.8 1342.8,1235.9 1345.2,1235.9 1345.2,1198.0 1347.6,1198.0 1347.6,1211.6 1350.0,1211.6 1350.0,1231.3 1352.4,1231.3 1352.4,1216.3 1354.8,1216.3 1354.8,1231.2 1357.2,1231.2 1357.2,1206.1 1359.6,1206.1 1359.6,1224.9 1362.0,1224.9 1362.0,1230.2 1364.4,1230.2 1364.4,1218.9 1366.8,1218.9 1366.8,1233.3 1369.2,1233.3 1369.2,1197.0 1371.6,1197.0 1371.6,1211.1 1374.0,1211.1 1374.0,1217.7 1376.4,1217.7 1376.4,1225.5 1378.8,1225.5 1378.8,1197.9 1381.2,1197.9 1381.2,1219.7 1383.6,1219.7 1383.6,1194.9 1386.0,1194.9 1386.0,1220.1 1388.4,1220.1 1388.4,1222.6 1390.8,1222.6 1390.8,1232.6 1393.2,1232.6 1393.2,1219.9 1395.6,1219.9 1395.6,1204.4 1398.0,1204.4 1398.0,1206.7 1400.4,1206.7 1400.4,1207.0 1402.8,1207.0 1402.8,1204.0 1405.2,1204.0 1405.2,1203.0 1407.6,1203.0 1407.6,1201.0 1410.0,1201.0 1410.0,1194.0 1412.4,1194.0 1412.4,1178.0 1414.8,1178.0 1414.8,1210.1 1415.5,1210.1 1415.5,1517.5" fill="#ffff00"/><polygon points="1449.5,1517.5 1449.5,1211.0 1453.2,1211.0 1453.2,1213.0 1455.6,1213.0 1455.6,1243.2 1458.0,1243.2 1458.0,1229.6 1460.4,1229.6 1460.4,1243.2 1462.8,1243.2 1462.8,1227.5 1465.2,1227.5 1465.2,1206.4 1467.6,1206.4 1467.6,1244.9 1470.0,1244.9 1470.0,1243.3 1472.4,1243.3 1472.4,1220.4 1474.8,1220.4 1474.8,1226.1 1477.2,1226.1 1477.2,1208.9 1479.6,1208.9 1479.6,1204.4 1482.0,1204.4 1482.0,1220.2 1484.4,1220.2 1484.4,1217.5 1486.8,1217.5 1486.8,1198.0 1489.2,1198.0 1489.2,1238.6 1491.6,1238.6 1491.6,1211.1 1494.0,1211.1 1494.0,1207.8 1496.4,1207.8 1496.4,1208.2 1498.8,1208.2 1498.8,1243.3 1501.2,1243.3 1501.2,1238.6 1503.6,1238.6 1503.6,1215.8 1506.0,1215.8 1506.0,1224.3 1508.4,1224.3 1508.4,1243.4 1510.8,1243.4 1510.8,1237.2 1513.2,1237.2 1513.2,1217.2 1515.6,1217.2 1515.6,1219.8 1518.0,1219.8 1518.0,1230.0 1520.4,1230.0 1520.4,1260.0 1522.8,1260.0 1522.8,1215.4 1525.2,1215.4 1525.2,1209.1 1527.6,1209.1 1527.6,1214.4 1530.0,1214.4 1530.0,1237.6 1532.4,1237.6 1532.4,1206.8 1534.8,1206.8 1534.8,1203.2 1537.2,1203.2 1537.2,1227.2 1539.6,1227.2 1539.6,1185.7 1542.0,1185.7 1542.0,1225.6 1544.4,1225.6 1544.4,1235.8 1546.8,1235.8 1546.8,1230.9 1549.2,1230.9 1549.2,1217.5 1551.6,1217.5 1551.6,1227.7 1554.0,1227.7 1554.0,1239.7 1556.4,1239.7 1556.4,1220.4 1558.8,1220.4 1558.8,1222.6 1561.2,1222.6 1561.2,1262.0 1563.6,1262.0 1563.6,1219.4 1566.0,1219.4 1566.0,1215.9 1568.4,1215.9 1568.4,1209.8 1570.8,1209.8 1570.8,1205.2 1573.2,1205.2 1573.2,1252.4 1575.6,1252.4 1575.6,1267.1 1578.0,1267.1 1578.0,1243.5 1580.4,1243.5 1580.4,1241.4 1582.8,1241.4 1582.8,1229.6 1585.2,1229.6 1585.2,1210.2 1587.6,1210.2 1587.6,1224.9 1590.0,1224.9 1590.0,1222.3 1592.4,1222.3 1592.4,1259.0 1594.8,1259.0 1594.8,1270.0 1597.2,1270.0 1597.2,1221.5 1599.6,1221.5 1599.6,1227.8 1602.0,1227.8 1602.0,1220.9 1604.4,1220.9 1604.4,1218.5 1606.8,1218.5 1606.8,1227.9 1609.2,1227.9 1609.2,1231.3 1611.6,1231.3 1611.6,1223.9 1614.0,1223.9 1614.0,1242.2 1616.4,1242.2 1616.4,1214.9 1618.8,1214.9 1618.8,1226.7 1621.2,1226.7 1621.2,1232.4 1623.6,1232.4 1623.6,1201.6 1626.0,1201.6 1626.0,1210.8 1628.4,1210.8 1628.4,1226.0 1630.8,1226.0 1630.8,1220.1 1633.2,1220.1 1633.2,1212.1 1635.6,1212.1 1635.6,1228.0 1638.0,1228.0 1638.0,1231.8 1640.4,1231.8 1640.4,1233.2 1642.8,1233.2 1642.8,1243.7 1645.2,1243.7 1645.2,1225.7 1647.6,1225.7 1647.6,1230.9 1650.0,1230.9 1650.0,1237.8 1652.4,1237.8 1652.4,1234.4 1654.8,1234.4 1654.8,1241.2 1657.2,1241.2 1657.2,1234.8 1659.6,1234.8 1659.6,1235.9 1662.0,1235.9 1662.0,1216.0 1664.4,1216.0 1664.4,1227.7 1666.8,1227.7 1666.8,1208.2 1669.2,1208.2 1669.2,1243.8 1671.6,1243.8 1671.6,1270.0 1674.0,1270.0 1674.0,1209.6 1676.4,1209.6 1676.4,1196.5 1678.8,1196.5 1678.8,1218.4 1681.2,1218.4 1681.2,1211.3 1683.6,1211.3 1683.6,1224.7 1686.0,1224.7 1686.0,1205.5 1688.4,1205.5 1688.4,1235.9 1690.8,1235.9 1690.8,1239.4 1693.2,1239.4 1693.2,1225.3 1695.6,1225.3 1695.6,1218.1 1698.0,1218.1 1698.0,1239.3 1700.4,1239.3 1700.4,1217.5 1702.8,1217.5 1702.8,1236.4 1705.2,1236.4 1705.2,1237.5 1707.6,1237.5 1707.6,1229.5 1710.0,1229.5 1710.0,1203.2 1712.4,1203.2 1712.4,1196.7 1714.8,1196.7 1714.8,1224.4 1717.2,1224.4 1717.2,1206.2 1719.6,1206.2 1719.6,1211.3 1722.0,1211.3 1722.0,1213.4 1724.4,1213.4 1724.4,1206.6 1726.8,1206.6 1726.8,1218.5 1729.2,1218.5 1729.2,1201.8 1731.6,1201.8 1731.6,1208.6 1734.0,1208.6 1734.0,1225.2 1736.4,1225.2 1736.4,1212.0 1738.8,1212.0 1738.8,1227.4 1741.2,1227.4 1741.2,1231.8 1743.6,1231.8 1743.6,1243.9 1746.0,1243.9 1746.0,1235.1 1748.4,1235.1 1748.4,1202.1 1750.8,1202.1 1750.8,1205.9 1753.2,1205.9 1753.2,1210.4 1755.6,1210.4 1755.6,1270.0 1758.0,1270.0 1758.0,1229.8 1760.4,1229.8 1760.4,1217.7 1762.8,1217.7 1762.8,1225.5 1765.2,1225.5 1765.2,1217.9 1767.6,1217.9 1767.6,1227.1 1770.0,1227.1 1770.0,1225.1 1772.4,1225.1 1772.4,1517.5" fill="#ffff00"/><polyline points="1409.5,1203.0 1412.8,1203.0 1412.8,1185.5 1415.8,1185.5 1415.8,1170.0 1418.0,1170.0 1418.0,1128.0 1420.4,1128.0 1420.4,1098.0 1422.8,1098.0 1422.8,1034.0 1426.2,1034.0 1426.2,767.0 1427.9,767.0 1427.9,532.0 1431.5,532.0 1431.5,521.0 1434.0,521.0 1434.0,527.0 1435.2,527.0 1435.2,948.0 1437.6,948.0 1437.6,1069.0 1440.6,1069.0 1440.6,1113.6 1443.0,1113.6 1443.0,1150.0 1445.7,1150.0 1445.7,1181.4 1448.2,1181.4 1448.2,1282.0" fill="none" stroke="#e6e600" stroke-width="2.3" stroke-linejoin="miter"/><line x1="1415.6" y1="1185" x2="1415.6" y2="1243" stroke="#e6e600" stroke-width="2.2"/><line x1="1418" y1="1301" x2="1446" y2="1301" stroke="#767676" stroke-width="2.5" stroke-dasharray="7 9"/><line x1="1418" y1="1409" x2="1446" y2="1409" stroke="#767676" stroke-width="2.5" stroke-dasharray="7 9"/><line x1="1448" y1="1283" x2="1448" y2="1517" stroke="#767676" stroke-width="2.4" stroke-dasharray="7.6 8.6"/><g fill="#ff0000"><rect x="1427.3" y="508.0" width="6.6" height="11.0"/><rect x="1427.3" y="529.6" width="6.6" height="11.0"/><rect x="1427.3" y="551.2" width="6.6" height="11.0"/><rect x="1427.3" y="572.9" width="6.6" height="11.0"/><rect x="1427.3" y="594.5" width="6.6" height="11.0"/><rect x="1427.3" y="616.1" width="6.6" height="11.0"/><rect x="1427.3" y="637.7" width="6.6" height="11.0"/><rect x="1427.3" y="659.3" width="6.6" height="11.0"/><rect x="1427.3" y="681.0" width="6.6" height="11.0"/><rect x="1427.3" y="702.6" width="6.6" height="11.0"/><rect x="1427.3" y="724.2" width="6.6" height="11.0"/><rect x="1427.3" y="745.8" width="6.6" height="11.0"/><rect x="1427.3" y="767.4" width="6.6" height="11.0"/><rect x="1427.3" y="789.1" width="6.6" height="11.0"/><rect x="1427.3" y="810.7" width="6.6" height="11.0"/><rect x="1427.3" y="832.3" width="6.6" height="11.0"/><rect x="1427.3" y="853.9" width="6.6" height="11.0"/><rect x="1427.3" y="875.5" width="6.6" height="11.0"/><rect x="1427.3" y="897.2" width="6.6" height="11.0"/><rect x="1427.3" y="918.8" width="6.6" height="11.0"/><rect x="1427.3" y="940.4" width="6.6" height="11.0"/><rect x="1427.3" y="962.0" width="6.6" height="11.0"/><rect x="1427.3" y="983.6" width="6.6" height="11.0"/><rect x="1427.3" y="1005.3" width="6.6" height="11.0"/><rect x="1427.3" y="1026.9" width="6.6" height="11.0"/><rect x="1427.3" y="1048.5" width="6.6" height="11.0"/><rect x="1427.3" y="1070.1" width="6.6" height="11.0"/><rect x="1427.3" y="1091.7" width="6.6" height="11.0"/><rect x="1427.3" y="1113.4" width="6.6" height="11.0"/><rect x="1427.3" y="1135.0" width="6.6" height="11.0"/><rect x="1427.3" y="1156.6" width="6.6" height="11.0"/><rect x="1427.3" y="1178.2" width="6.6" height="11.0"/><rect x="1427.3" y="1199.8" width="6.6" height="11.0"/><rect x="1427.3" y="1221.5" width="6.6" height="11.0"/><rect x="1427.3" y="1243.1" width="6.6" height="11.0"/><rect x="1427.3" y="1264.7" width="6.6" height="11.0"/><rect x="1427.3" y="1286.3" width="6.6" height="11.0"/><rect x="1427.3" y="1307.9" width="6.6" height="11.0"/><rect x="1427.3" y="1329.6" width="6.6" height="11.0"/><rect x="1427.3" y="1351.2" width="6.6" height="11.0"/><rect x="1427.3" y="1372.8" width="6.6" height="11.0"/><rect x="1427.3" y="1394.4" width="6.6" height="11.0"/><rect x="1427.3" y="1416.0" width="6.6" height="11.0"/><rect x="1427.3" y="1437.7" width="6.6" height="11.0"/><rect x="1427.3" y="1459.3" width="6.6" height="11.0"/><rect x="1427.3" y="1480.9" width="6.6" height="11.0"/><rect x="1427.3" y="1502.5" width="6.6" height="11.0"/></g></g>
<text x="69.37" y="452.00" fill="#ececff" stroke="#312f69" stroke-width="1.00" font-family="'Liberation Mono', monospace" font-size="44.63" font-weight="bold" textLength="70.32" lengthAdjust="spacingAndGlyphs" xml:space="preserve">-4.0</text>
<rect x="32.10" y="527.70" width="106.90" height="39.80" fill="#04042a"/>
<rect x="29.10" y="524.70" width="106.90" height="40.20" fill="#06060e"/>
<rect x="31.70" y="527.60" width="102.00" height="34.50" fill="#ffffff"/>
<text x="44.34" y="560.00" fill="#080808" stroke="#ffffff" stroke-width="1.00" font-family="'Liberation Mono', monospace" font-size="44.63" font-weight="bold" textLength="88.36" lengthAdjust="spacingAndGlyphs" xml:space="preserve">-14.0</text>
<text x="154.23" y="556.40" fill="#0c0c34" stroke="#0c0c34" stroke-width="0.8" font-family="'Liberation Mono', monospace" font-size="28.24" textLength="67.61" lengthAdjust="spacingAndGlyphs" xml:space="preserve">REF</text>
<text x="152.03" y="554.00" fill="#f2f2f2" font-family="'Liberation Mono', monospace" font-size="28.24" textLength="67.61" lengthAdjust="spacingAndGlyphs" xml:space="preserve" stroke="#f2f2f2" stroke-width="0.8">REF</text>
<text x="53.46" y="668.00" fill="#ececff" stroke="#312f69" stroke-width="1.00" font-family="'Liberation Mono', monospace" font-size="44.63" font-weight="bold" textLength="86.20" lengthAdjust="spacingAndGlyphs" xml:space="preserve">-24.0</text>
<text x="73.64" y="700.40" fill="#0c0c34" stroke="#0c0c34" stroke-width="0.8" font-family="'Liberation Mono', monospace" font-size="28.24" textLength="68.52" lengthAdjust="spacingAndGlyphs" xml:space="preserve">dBm</text>
<text x="71.44" y="698.00" fill="#f2f2f2" font-family="'Liberation Mono', monospace" font-size="28.24" textLength="68.52" lengthAdjust="spacingAndGlyphs" xml:space="preserve" stroke="#f2f2f2" stroke-width="0.8">dBm</text>
<text x="53.46" y="884.00" fill="#ececff" stroke="#312f69" stroke-width="1.00" font-family="'Liberation Mono', monospace" font-size="44.63" font-weight="bold" textLength="86.20" lengthAdjust="spacingAndGlyphs" xml:space="preserve">-44.0</text>
<text x="53.46" y="1100.00" fill="#ececff" stroke="#312f69" stroke-width="1.00" font-family="'Liberation Mono', monospace" font-size="44.63" font-weight="bold" textLength="86.20" lengthAdjust="spacingAndGlyphs" xml:space="preserve">-64.0</text>
<text x="53.46" y="1316.00" fill="#ececff" stroke="#312f69" stroke-width="1.00" font-family="'Liberation Mono', monospace" font-size="44.63" font-weight="bold" textLength="86.20" lengthAdjust="spacingAndGlyphs" xml:space="preserve">-84.0</text>
<text x="36.37" y="1531.00" fill="#ececff" stroke="#312f69" stroke-width="1.00" font-family="'Liberation Mono', monospace" font-size="44.63" font-weight="bold" textLength="105.31" lengthAdjust="spacingAndGlyphs" xml:space="preserve">-104.0</text>
<rect x="59.00" y="1541.70" width="182.30" height="40.20" fill="#04042a"/>
<rect x="56.00" y="1538.70" width="182.30" height="40.60" fill="#06060e"/>
<rect x="58.60" y="1541.60" width="177.40" height="34.90" fill="#ffffff"/>
<text x="61.37" y="1574.00" fill="#080808" stroke="#ffffff" stroke-width="0.30" font-family="'Liberation Mono', monospace" font-size="44.63" textLength="174.87" lengthAdjust="spacingAndGlyphs" xml:space="preserve">1025.000</text>
<text x="245.66" y="1574.90" fill="#0c0c34" stroke="#0c0c34" stroke-width="0.8" font-family="'Liberation Mono', monospace" font-size="28.24" textLength="48.62" lengthAdjust="spacingAndGlyphs" xml:space="preserve">nm</text>
<text x="243.46" y="1572.50" fill="#f2f2f2" font-family="'Liberation Mono', monospace" font-size="28.24" textLength="48.62" lengthAdjust="spacingAndGlyphs" xml:space="preserve" stroke="#f2f2f2" stroke-width="0.8">nm</text>
<rect x="880.00" y="1541.70" width="182.30" height="40.20" fill="#04042a"/>
<rect x="877.00" y="1538.70" width="182.30" height="40.60" fill="#06060e"/>
<rect x="879.60" y="1541.60" width="177.40" height="34.90" fill="#ffffff"/>
<text x="883.37" y="1574.00" fill="#080808" stroke="#ffffff" stroke-width="0.30" font-family="'Liberation Mono', monospace" font-size="44.63" textLength="174.87" lengthAdjust="spacingAndGlyphs" xml:space="preserve">1050.000</text>
<text x="1066.66" y="1574.90" fill="#0c0c34" stroke="#0c0c34" stroke-width="0.8" font-family="'Liberation Mono', monospace" font-size="28.24" textLength="48.62" lengthAdjust="spacingAndGlyphs" xml:space="preserve">nm</text>
<text x="1064.46" y="1572.50" fill="#f2f2f2" font-family="'Liberation Mono', monospace" font-size="28.24" textLength="48.62" lengthAdjust="spacingAndGlyphs" xml:space="preserve" stroke="#f2f2f2" stroke-width="0.8">nm</text>
<rect x="1269.00" y="1541.70" width="139.30" height="40.20" fill="#04042a"/>
<rect x="1266.00" y="1538.70" width="139.30" height="40.60" fill="#06060e"/>
<rect x="1268.60" y="1541.60" width="134.40" height="34.90" fill="#ffffff"/>
<text x="1312.64" y="1574.00" fill="#080808" stroke="#ffffff" stroke-width="0.30" font-family="'Liberation Mono', monospace" font-size="44.63" textLength="90.69" lengthAdjust="spacingAndGlyphs" xml:space="preserve">5.00</text>
<text x="1412.92" y="1574.90" fill="#0c0c34" stroke="#0c0c34" stroke-width="0.8" font-family="'Liberation Mono', monospace" font-size="28.24" textLength="90.19" lengthAdjust="spacingAndGlyphs" xml:space="preserve">nm/D</text>
<text x="1410.72" y="1572.50" fill="#f2f2f2" font-family="'Liberation Mono', monospace" font-size="28.24" textLength="90.19" lengthAdjust="spacingAndGlyphs" xml:space="preserve" stroke="#f2f2f2" stroke-width="0.8">nm/D</text>
<rect x="1658.00" y="1541.70" width="182.40" height="40.20" fill="#04042a"/>
<rect x="1655.00" y="1538.70" width="182.40" height="40.60" fill="#06060e"/>
<rect x="1657.60" y="1541.60" width="177.50" height="34.90" fill="#ffffff"/>
<text x="1661.38" y="1574.00" fill="#080808" stroke="#ffffff" stroke-width="0.30" font-family="'Liberation Mono', monospace" font-size="44.63" textLength="173.84" lengthAdjust="spacingAndGlyphs" xml:space="preserve">1075.000</text>
<text x="1844.66" y="1574.90" fill="#0c0c34" stroke="#0c0c34" stroke-width="0.8" font-family="'Liberation Mono', monospace" font-size="28.24" textLength="48.62" lengthAdjust="spacingAndGlyphs" xml:space="preserve">nm</text>
<text x="1842.46" y="1572.50" fill="#f2f2f2" font-family="'Liberation Mono', monospace" font-size="28.24" textLength="48.62" lengthAdjust="spacingAndGlyphs" xml:space="preserve" stroke="#f2f2f2" stroke-width="0.8">nm</text>
<rect x="336.00" y="1590.60" width="77.50" height="55.90" fill="#050530"/>
<rect x="336.00" y="1590.60" width="73.50" height="51.90" fill="#e4e4fa"/>
<rect x="339.20" y="1593.80" width="70.30" height="48.70" fill="#6868d2"/>
<text x="340.00" y="1617.20" fill="#000008" font-family="'Liberation Mono', monospace" font-size="27.02" textLength="64.80" lengthAdjust="spacingAndGlyphs" xml:space="preserve" stroke="#000008" stroke-width="0.5">RES</text>
<text x="340.00" y="1639.20" fill="#000008" font-family="'Liberation Mono', monospace" font-size="27.02" textLength="64.80" lengthAdjust="spacingAndGlyphs" xml:space="preserve" stroke="#000008" stroke-width="0.5">COR</text>
<rect x="419.80" y="1590.60" width="77.50" height="55.90" fill="#050530"/>
<rect x="419.80" y="1590.60" width="73.50" height="51.90" fill="#e4e4fa"/>
<rect x="423.00" y="1593.80" width="70.30" height="48.70" fill="#6868d2"/>
<text x="423.80" y="1617.20" fill="#000008" font-family="'Liberation Mono', monospace" font-size="27.02" textLength="64.80" lengthAdjust="spacingAndGlyphs" xml:space="preserve" stroke="#000008" stroke-width="0.5">LVL</text>
<text x="423.80" y="1639.20" fill="#000008" font-family="'Liberation Mono', monospace" font-size="27.02" textLength="64.80" lengthAdjust="spacingAndGlyphs" xml:space="preserve" stroke="#000008" stroke-width="0.5">SHF</text>
<rect x="503.60" y="1590.60" width="77.50" height="55.90" fill="#050530"/>
<rect x="503.60" y="1590.60" width="73.50" height="51.90" fill="#e4e4fa"/>
<rect x="506.80" y="1593.80" width="70.30" height="48.70" fill="#6868d2"/>
<text x="507.60" y="1617.20" fill="#000008" font-family="'Liberation Mono', monospace" font-size="27.02" textLength="64.80" lengthAdjust="spacingAndGlyphs" xml:space="preserve" stroke="#000008" stroke-width="0.5">WL </text>
<text x="507.60" y="1639.20" fill="#000008" font-family="'Liberation Mono', monospace" font-size="27.02" textLength="64.80" lengthAdjust="spacingAndGlyphs" xml:space="preserve" stroke="#000008" stroke-width="0.5">SHF</text>
<rect x="587.40" y="1590.60" width="77.50" height="55.90" fill="#050530"/>
<rect x="587.40" y="1590.60" width="73.50" height="51.90" fill="#e4e4fa"/>
<rect x="590.60" y="1593.80" width="70.30" height="48.70" fill="#6868d2"/>
<text x="591.40" y="1617.20" fill="#000008" font-family="'Liberation Mono', monospace" font-size="27.02" textLength="64.80" lengthAdjust="spacingAndGlyphs" xml:space="preserve" stroke="#000008" stroke-width="0.5">NOI</text>
<text x="591.40" y="1639.20" fill="#000008" font-family="'Liberation Mono', monospace" font-size="27.02" textLength="64.80" lengthAdjust="spacingAndGlyphs" xml:space="preserve" stroke="#000008" stroke-width="0.5">MSK</text>
<rect x="671.20" y="1590.60" width="77.50" height="55.90" fill="#050530"/>
<rect x="671.20" y="1590.60" width="73.50" height="51.90" fill="#e4e4fa"/>
<rect x="674.40" y="1593.80" width="70.30" height="48.70" fill="#6868d2"/>
<text x="675.20" y="1617.20" fill="#000008" font-family="'Liberation Mono', monospace" font-size="27.02" textLength="64.80" lengthAdjust="spacingAndGlyphs" xml:space="preserve" stroke="#000008" stroke-width="0.5">SRC</text>
<text x="675.20" y="1639.20" fill="#000008" font-family="'Liberation Mono', monospace" font-size="27.02" textLength="64.80" lengthAdjust="spacingAndGlyphs" xml:space="preserve" stroke="#000008" stroke-width="0.5">ZOM</text>
<rect x="755.00" y="1590.60" width="77.50" height="55.90" fill="#050530"/>
<rect x="755.00" y="1590.60" width="73.50" height="51.90" fill="#e4e4fa"/>
<rect x="758.20" y="1593.80" width="70.30" height="48.70" fill="#6868d2"/>
<text x="759.00" y="1617.20" fill="#000008" font-family="'Liberation Mono', monospace" font-size="27.02" textLength="64.80" lengthAdjust="spacingAndGlyphs" xml:space="preserve" stroke="#000008" stroke-width="0.5">SRC</text>
<text x="759.00" y="1639.20" fill="#000008" font-family="'Liberation Mono', monospace" font-size="27.02" textLength="64.80" lengthAdjust="spacingAndGlyphs" xml:space="preserve" stroke="#000008" stroke-width="0.5">1-2</text>
<rect x="838.80" y="1590.60" width="76.40" height="57.00" fill="#f0f0ff"/>
<rect x="838.80" y="1590.60" width="74.40" height="54.90" fill="#000018"/>
<rect x="841.30" y="1593.10" width="71.90" height="52.40" fill="#00003e"/>
<text x="842.80" y="1617.20" fill="#f4f4f4" font-family="'Liberation Mono', monospace" font-size="27.02" textLength="64.80" lengthAdjust="spacingAndGlyphs" xml:space="preserve" stroke="#f4f4f4" stroke-width="0.5">VAC</text>
<text x="842.80" y="1639.20" fill="#f4f4f4" font-family="'Liberation Mono', monospace" font-size="27.02" textLength="64.80" lengthAdjust="spacingAndGlyphs" xml:space="preserve" stroke="#f4f4f4" stroke-width="0.5">WL </text>
<rect x="922.60" y="1590.60" width="76.40" height="57.00" fill="#f0f0ff"/>
<rect x="922.60" y="1590.60" width="74.40" height="54.90" fill="#000018"/>
<rect x="925.10" y="1593.10" width="71.90" height="52.40" fill="#00003e"/>
<text x="926.60" y="1617.20" fill="#f4f4f4" font-family="'Liberation Mono', monospace" font-size="27.02" textLength="64.80" lengthAdjust="spacingAndGlyphs" xml:space="preserve" stroke="#f4f4f4" stroke-width="0.5">AUT</text>
<text x="926.60" y="1639.20" fill="#f4f4f4" font-family="'Liberation Mono', monospace" font-size="27.02" textLength="64.80" lengthAdjust="spacingAndGlyphs" xml:space="preserve" stroke="#f4f4f4" stroke-width="0.5">OFS</text>
<rect x="1006.40" y="1590.60" width="76.40" height="57.00" fill="#f0f0ff"/>
<rect x="1006.40" y="1590.60" width="74.40" height="54.90" fill="#000018"/>
<rect x="1008.90" y="1593.10" width="71.90" height="52.40" fill="#00003e"/>
<text x="1010.40" y="1617.20" fill="#f4f4f4" font-family="'Liberation Mono', monospace" font-size="27.02" textLength="64.80" lengthAdjust="spacingAndGlyphs" xml:space="preserve" stroke="#f4f4f4" stroke-width="0.5">AUT</text>
<text x="1010.40" y="1639.20" fill="#f4f4f4" font-family="'Liberation Mono', monospace" font-size="27.02" textLength="64.80" lengthAdjust="spacingAndGlyphs" xml:space="preserve" stroke="#f4f4f4" stroke-width="0.5">ANA</text>
<rect x="1090.20" y="1590.60" width="77.50" height="55.90" fill="#050530"/>
<rect x="1090.20" y="1590.60" width="73.50" height="51.90" fill="#e4e4fa"/>
<rect x="1093.40" y="1593.80" width="70.30" height="48.70" fill="#6868d2"/>
<text x="1094.20" y="1617.20" fill="#000008" font-family="'Liberation Mono', monospace" font-size="27.02" textLength="64.80" lengthAdjust="spacingAndGlyphs" xml:space="preserve" stroke="#000008" stroke-width="0.5">AUT</text>
<text x="1094.20" y="1639.20" fill="#000008" font-family="'Liberation Mono', monospace" font-size="27.02" textLength="64.80" lengthAdjust="spacingAndGlyphs" xml:space="preserve" stroke="#000008" stroke-width="0.5">SRC</text>
<rect x="1174.00" y="1590.60" width="77.50" height="55.90" fill="#050530"/>
<rect x="1174.00" y="1590.60" width="73.50" height="51.90" fill="#e4e4fa"/>
<rect x="1177.20" y="1593.80" width="70.30" height="48.70" fill="#6868d2"/>
<text x="1178.00" y="1617.20" fill="#000008" font-family="'Liberation Mono', monospace" font-size="27.02" textLength="64.80" lengthAdjust="spacingAndGlyphs" xml:space="preserve" stroke="#000008" stroke-width="0.5">AUT</text>
<text x="1178.00" y="1639.20" fill="#000008" font-family="'Liberation Mono', monospace" font-size="27.02" textLength="64.80" lengthAdjust="spacingAndGlyphs" xml:space="preserve" stroke="#000008" stroke-width="0.5">SCL</text>
<rect x="1257.80" y="1590.60" width="77.50" height="55.90" fill="#050530"/>
<rect x="1257.80" y="1590.60" width="73.50" height="51.90" fill="#e4e4fa"/>
<rect x="1261.00" y="1593.80" width="70.30" height="48.70" fill="#6868d2"/>
<text x="1261.80" y="1617.20" fill="#000008" font-family="'Liberation Mono', monospace" font-size="27.02" textLength="64.80" lengthAdjust="spacingAndGlyphs" xml:space="preserve" stroke="#000008" stroke-width="0.5">AUT</text>
<text x="1261.80" y="1639.20" fill="#000008" font-family="'Liberation Mono', monospace" font-size="27.02" textLength="64.80" lengthAdjust="spacingAndGlyphs" xml:space="preserve" stroke="#000008" stroke-width="0.5">REF</text>
<rect x="1341.60" y="1590.60" width="77.50" height="55.90" fill="#050530"/>
<rect x="1341.60" y="1590.60" width="73.50" height="51.90" fill="#e4e4fa"/>
<rect x="1344.80" y="1593.80" width="70.30" height="48.70" fill="#6868d2"/>
<text x="1345.60" y="1617.20" fill="#000008" font-family="'Liberation Mono', monospace" font-size="27.02" textLength="64.80" lengthAdjust="spacingAndGlyphs" xml:space="preserve" stroke="#000008" stroke-width="0.5">AUT</text>
<text x="1345.60" y="1639.20" fill="#000008" font-family="'Liberation Mono', monospace" font-size="27.02" textLength="64.80" lengthAdjust="spacingAndGlyphs" xml:space="preserve" stroke="#000008" stroke-width="0.5">CTR</text>
<rect x="1425.40" y="1590.60" width="77.50" height="55.90" fill="#050530"/>
<rect x="1425.40" y="1590.60" width="73.50" height="51.90" fill="#e4e4fa"/>
<rect x="1428.60" y="1593.80" width="70.30" height="48.70" fill="#6868d2"/>
<text x="1429.40" y="1617.20" fill="#000008" font-family="'Liberation Mono', monospace" font-size="27.02" textLength="64.80" lengthAdjust="spacingAndGlyphs" xml:space="preserve" stroke="#000008" stroke-width="0.5">SWP</text>
<text x="1429.40" y="1639.20" fill="#000008" font-family="'Liberation Mono', monospace" font-size="27.02" textLength="64.80" lengthAdjust="spacingAndGlyphs" xml:space="preserve" stroke="#000008" stroke-width="0.5">1-2</text>
<rect x="1509.20" y="1590.60" width="77.50" height="55.90" fill="#050530"/>
<rect x="1509.20" y="1590.60" width="73.50" height="51.90" fill="#e4e4fa"/>
<rect x="1512.40" y="1593.80" width="70.30" height="48.70" fill="#6868d2"/>
<text x="1513.20" y="1617.20" fill="#000008" font-family="'Liberation Mono', monospace" font-size="27.02" textLength="64.80" lengthAdjust="spacingAndGlyphs" xml:space="preserve" stroke="#000008" stroke-width="0.5">SMO</text>
<text x="1513.20" y="1639.20" fill="#000008" font-family="'Liberation Mono', monospace" font-size="27.02" textLength="64.80" lengthAdjust="spacingAndGlyphs" xml:space="preserve" stroke="#000008" stroke-width="0.5">OTH</text>
<rect x="1606.00" y="1590.60" width="89.00" height="55.90" fill="#050530"/>
<rect x="1606.00" y="1590.60" width="85.00" height="51.90" fill="#e4e4fa"/>
<rect x="1609.20" y="1593.80" width="81.80" height="48.70" fill="#6868d2"/>
<text x="1617.29" y="1629.20" fill="#2a2a10" stroke="#2a2a10" stroke-width="0.8" font-family="'Liberation Mono', monospace" font-size="28.24" textLength="67.37" lengthAdjust="spacingAndGlyphs" xml:space="preserve">RPT</text>
<text x="1615.29" y="1627.00" fill="#ffff00" font-family="'Liberation Mono', monospace" font-size="28.24" textLength="67.37" lengthAdjust="spacingAndGlyphs" xml:space="preserve" stroke="#ffff00" stroke-width="0.9">RPT</text>
<rect x="1703.00" y="1590.60" width="90.00" height="55.90" fill="#050530"/>
<rect x="1703.00" y="1590.60" width="86.00" height="51.90" fill="#e4e4fa"/>
<rect x="1706.20" y="1593.80" width="82.80" height="48.70" fill="#6868d2"/>
<text x="1716.32" y="1629.20" fill="#2a2a10" stroke="#2a2a10" stroke-width="0.8" font-family="'Liberation Mono', monospace" font-size="28.24" textLength="66.77" lengthAdjust="spacingAndGlyphs" xml:space="preserve">SGL</text>
<text x="1714.32" y="1627.00" fill="#ffff00" font-family="'Liberation Mono', monospace" font-size="28.24" textLength="66.77" lengthAdjust="spacingAndGlyphs" xml:space="preserve" stroke="#ffff00" stroke-width="0.9">SGL</text>
<rect x="1800.50" y="1590.60" width="89.40" height="57.00" fill="#f0f0ff"/>
<rect x="1800.50" y="1590.60" width="87.40" height="54.90" fill="#000018"/>
<rect x="1803.00" y="1593.10" width="84.90" height="52.40" fill="#00003e"/>
<text x="1814.58" y="1629.20" fill="#2a2a10" stroke="#2a2a10" stroke-width="0.8" font-family="'Liberation Mono', monospace" font-size="28.24" textLength="66.40" lengthAdjust="spacingAndGlyphs" xml:space="preserve">STP</text>
<text x="1812.58" y="1627.00" fill="#ffff00" font-family="'Liberation Mono', monospace" font-size="28.24" textLength="66.40" lengthAdjust="spacingAndGlyphs" xml:space="preserve" stroke="#ffff00" stroke-width="0.9">STP</text>
</g>
</svg>
</body>
</html>
